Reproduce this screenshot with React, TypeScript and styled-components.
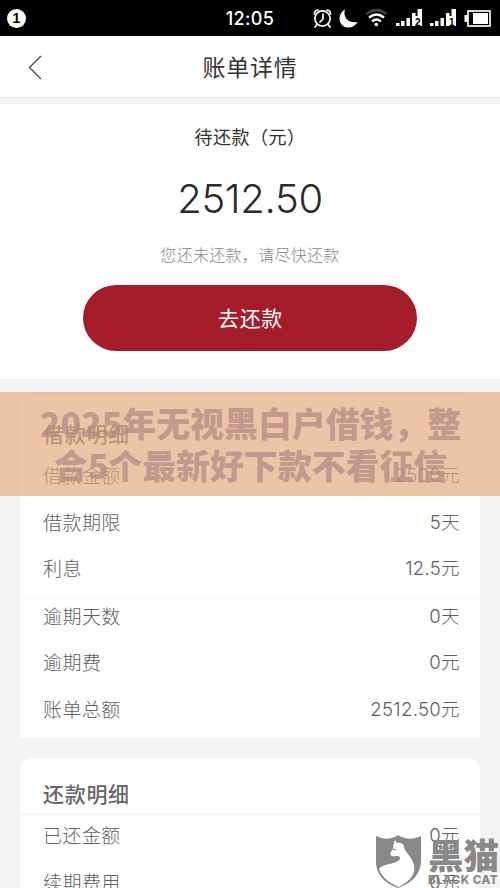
import React from 'react';
import styled, { createGlobalStyle } from 'styled-components';

const GlobalStyle = createGlobalStyle`
  * { box-sizing: border-box; }
  html, body { margin: 0; background: #f4f4f4; }
  body { font-family: "Noto Sans CJK SC", sans-serif; overflow: hidden; }
`;

const Screen = styled.main`
  position: relative;
  width: 500px;
  height: 888px;
  overflow: hidden;
  background: #f4f4f4;
`;

const StatusBar = styled.header`
  display: grid;
  grid-template-columns: 1fr auto 1fr;
  align-items: center;
  height: 36px;
  padding: 0 9px 0 7px;
  background: #000;
  color: #fff;
`;

const Notice = styled.span`
  width: 19px;
  height: 19px;
  border-radius: 50%;
  background: #fff;
  color: #000;
  font: bold 14px/19px "Liberation Sans", sans-serif;
  text-align: center;
`;

const Clock = styled.time`
  font: 500 18px/34px Inter, sans-serif;
  padding: 2px 0 0 2px;
  letter-spacing: 0.35px;
`;

const StatusIcons = styled.svg`
  justify-self: end;
  width: 180px;
  height: 36px;
`;

const NavBar = styled.nav`
  display: grid;
  grid-template-columns: 70px 1fr 70px;
  align-items: center;
  height: 62px;
  border-bottom: 1px solid #e6e6e6;
  background: #fff;
`;

const BackIcon = styled.svg`
  width: 16px;
  height: 26px;
  margin-left: 27px;
`;

const PageTitle = styled.h1`
  margin: 0;
  color: #333;
  font-size: 23px;
  font-weight: 400;
  line-height: 60px;
  letter-spacing: 0.8px;
  text-align: center;
  padding-bottom: 2px;
`;

const Summary = styled.section`
  display: flex;
  flex-direction: column;
  align-items: center;
  height: 275px;
  margin-top: 6px;
  background: #fff;
`;

const SummaryLabel = styled.div`
  height: 65px;
  color: #333;
  font-size: 18px;
  line-height: 65px;
  letter-spacing: 0.5px;
`;

const Amount = styled.div`
  height: 60px;
  color: #2b2b2b;
  font: 300 40px/60px Inter, sans-serif;
  letter-spacing: -0.3px;
`;

const Hint = styled.div`
  height: 56px;
  color: #888;
  font-size: 16px;
  font-weight: 300;
  line-height: 50px;
  letter-spacing: 0.3px;
`;

const PayButton = styled.button`
  width: 334px;
  height: 66px;
  border: 0;
  border-radius: 33px;
  background: #a41c2a;
  color: #fff;
  font: 400 21px/64px "Noto Sans CJK SC", sans-serif;
  letter-spacing: 0.7px;
  padding: 0 0 2px 1px;
`;

const Card = styled.section<{ $first?: boolean }>`
  height: ${p => (p.$first ? 340 : 300)}px;
  margin: ${p => (p.$first ? 19 : 20)}px 20px 0;
  border-radius: ${p => (p.$first ? '12px 12px 0 0' : '12px')};
  background: #fff;
`;

const CardTitle = styled.h2`
  height: 57px;
  margin: 0;
  padding: 7px 23px 0;
  border-bottom: 1px solid #eee;
  color: #666;
  font-size: 21px;
  font-weight: 500;
  line-height: 56px;
  letter-spacing: 0.7px;
`;

const Rows = styled.dl<{ $divided?: boolean }>`
  margin: 0;
  padding-top: ${p => (p.$divided ? 0 : 3)}px;
  border-top: ${p => (p.$divided ? '1px solid #f5f5f5' : '0')};
`;

const DetailRow = styled.div`
  display: flex;
  justify-content: space-between;
  height: 46.6px;
  padding: 0 20px 0 23px;
  color: #606060;
  font-size: 19px;
  font-weight: 300;
  line-height: 34px;
`;

const Term = styled.dt`
  letter-spacing: 0.45px;
`;

const Value = styled.dd`
  margin: 0;
  font-family: Inter, "Noto Sans CJK SC", sans-serif;
  font-size: 18.6px;
  letter-spacing: 0.3px;
`;

const Overlay = styled.div`
  position: absolute;
  top: 392px;
  left: 0;
  width: 500px;
  height: 104px;
  padding: 10px 0 0 1px;
  background: rgba(227, 170, 124, 0.68);
  color: rgba(178, 135, 135, 0.72);
  font-size: 33.9px;
  font-weight: 900;
  line-height: 42px;
  text-align: center;
  white-space: nowrap;
`;

const OverlayLine = styled.div`
  height: 42px;
`;

const Watermark = styled.aside`
  position: absolute;
  top: 835px;
  left: 375px;
  display: flex;
  color: #898989;
`;

const Shield = styled.svg`
  width: 47px;
  height: 53px;
  margin-right: 6px;
`;

const Brand = styled.div`
  width: 75px;
  white-space: nowrap;
`;

const BrandName = styled.div`
  height: 39px;
  font-size: 35.5px;
  font-weight: 900;
  line-height: 37px;
`;

const BrandLatin = styled.div`
  font: 800 11.5px/13px Inter, sans-serif;
  letter-spacing: 0.45px;
`;

const groups = [
  [['借款金额', '2500元'], ['借款期限', '5天'], ['利息', '12.5元']],
  [['逾期天数', '0天'], ['逾期费', '0元'], ['账单总额', '2512.50元']],
];

function Details({ items, divided = false }: { items: string[][]; divided?: boolean }) {
  return (
    <Rows $divided={divided}>
      {items.map(([label, value]) => (
        <DetailRow key={label}><Term>{label}</Term><Value>{value}</Value></DetailRow>
      ))}
    </Rows>
  );
}

function Indicators() {
  return (
    <StatusIcons viewBox="311 0 180 36" fill="none">
      <g stroke="#fff" strokeWidth="1.7" strokeLinecap="round">
        <circle cx="322.5" cy="18.5" r="7.6" />
        <path d="M314.5 14a4 4 0 0 1 3.5-4M327 10a4 4 0 0 1 3.5 4M323 14v5l-3 3M316.5 25l-1.5 2M328.5 25l1.5 2" />
      </g>
      <path fill="#fff" d="M345 9.5c-9 5-6 18 3 18 4 0 8-2 9.500-5.500-9 2-15-5-12.500-12.500Z" />
      <path d="M366.500 14Q376.500 6 386.500 14" stroke="#444" strokeWidth="2.5" />
      <path d="M369 17.500Q376.500 11.500 384 17.500M372 21.500Q376.500 17.500 381 21.500" stroke="#fff" strokeWidth="2.3" />
      <circle cx="376.300" cy="24.500" r="1.800" fill="#fff" />
      {[396, 430].map((x, i) => (
        <g key={x} fill="#fff">
          <path d={`M${x} 23h3.500v3h-3.500zM${x + 5} 21h3.500v5h-3.500zM${x + 10.5} 18h3.500v8h-3.500zM${x + 16} 13h3.500v3h2v-7h4.500v17h-10z`} />
          <text x={x + 19} y="25.500" fill="#000" fontFamily="Liberation Sans" fontSize="10" fontWeight="700">{i ? 1 : 2}</text>
        </g>
      ))}
      <rect x="468" y="11" width="22" height="15" stroke="#fff" strokeWidth="1.7" />
      <path fill="#fff" d="M473 13h15v11h-15zM464.500 15h3v7h-3z" />
    </StatusIcons>
  );
}

export default function App() {
  return (
    <>
      <GlobalStyle />
      <Screen>
        <StatusBar><Notice>1</Notice><Clock>12:05</Clock><Indicators /></StatusBar>
        <NavBar>
          <BackIcon viewBox="0 0 16 26"><path d="M14 2 2.5 13.5 14 25" fill="none" stroke="#444" strokeWidth="1.3" /></BackIcon>
          <PageTitle>账单详情</PageTitle>
        </NavBar>
        <Summary>
          <SummaryLabel>待还款（元）</SummaryLabel>
          <Amount>2512.50</Amount>
          <Hint>您还未还款，请尽快还款</Hint>
          <PayButton>去还款</PayButton>
        </Summary>
        <Card $first>
          <CardTitle>借款明细</CardTitle>
          <Details items={groups[0]} />
          <Details items={groups[1]} divided />
        </Card>
        <Card>
          <CardTitle>还款明细</CardTitle>
          <Details items={[['已还金额', '0元'], ['续期费用', '0元']]} />
        </Card>
        <Overlay>
          <OverlayLine>2025年无视黑白户借钱，整</OverlayLine>
          <OverlayLine>合5个最新好下款不看征信</OverlayLine>
        </Overlay>
        <Watermark>
          <Shield viewBox="0 0 47 53">
            <path fill="#898989" d="M1 1q12 6 22-1 11 7 23 1v24q0 20-23 28Q1 45 1 27Z" />
            <path fill="#fff" d="m20 5 2 3q6-1 7 4c1 5 6 8 9 15 4 10-1 18-14 25C15 48 7 43 4 34c5-6 13-4 19-8 4-3 2-5-2-5-4 1-7-1-5-4 3-3 2-8 4-12Z" />
            <path d="m18 14 3 1" stroke="#898989" strokeWidth="1.2" />
          </Shield>
          <Brand><BrandName>黑猫</BrandName><BrandLatin>BLACK CAT</BrandLatin></Brand>
        </Watermark>
      </Screen>
    </>
  );
}
